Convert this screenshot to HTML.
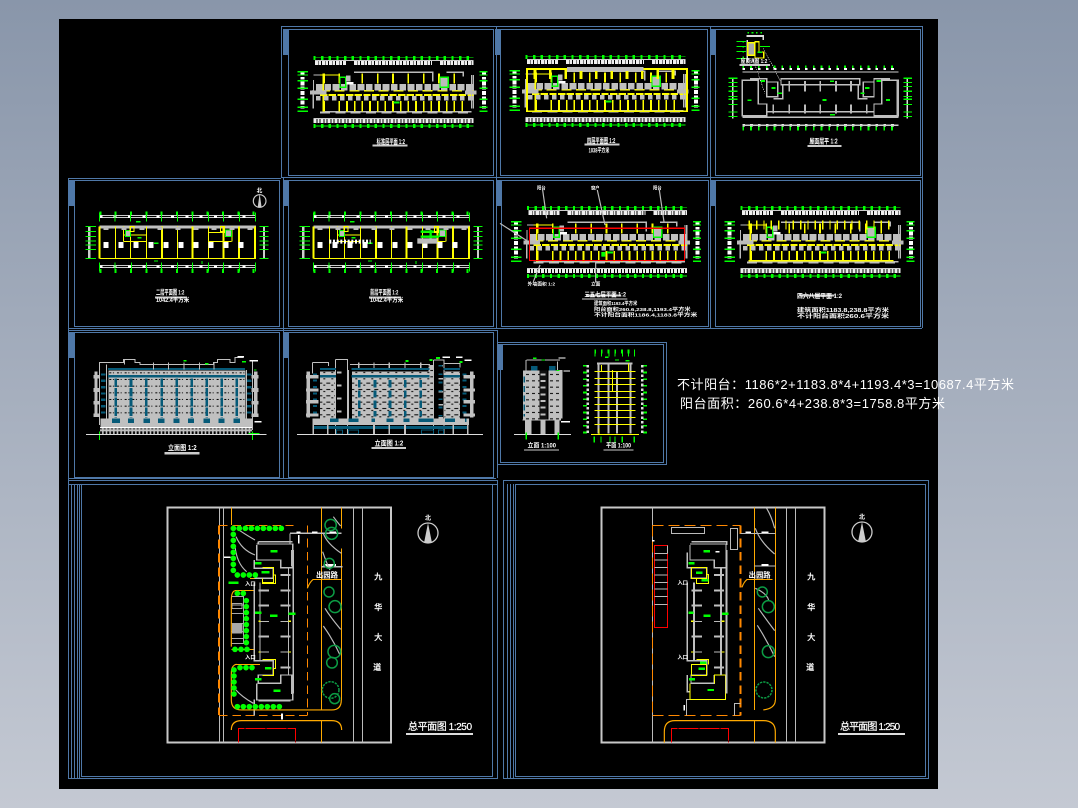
<!DOCTYPE html>
<html lang="zh"><head><meta charset="utf-8"><title>CAD</title>
<style>
html,body{margin:0;padding:0;width:1078px;height:808px;overflow:hidden;background:#a5aebd}
svg{position:absolute;left:0;top:0;display:block}
text{font-family:"Liberation Sans","WenQuanYi Zen Hei","Noto Sans CJK SC",sans-serif;fill:#fff}
</style></head><body>
<svg width="1078" height="808" viewBox="0 0 1078 808" xmlns="http://www.w3.org/2000/svg">
<defs>
<linearGradient id="bg" x1="0" y1="0" x2="0" y2="1"><stop offset="0" stop-color="#8996aa"/><stop offset="1" stop-color="#c4c9d3"/></linearGradient>
<pattern id="w1" patternUnits="userSpaceOnUse" width="23" height="20"><rect width="23" height="20" fill="#c0c0c0"/><rect x="3" y="7" width="6" height="3" fill="#000"/><rect x="14" y="7" width="3" height="3" fill="#000"/></pattern>
<pattern id="w2" patternUnits="userSpaceOnUse" width="24" height="19"><rect width="24" height="19" fill="#c0c0c0"/><rect x="1" y="6" width="12" height="3" fill="#000"/><rect x="16" y="12" width="6" height="3" fill="#000"/></pattern>
<pattern id="b1" patternUnits="userSpaceOnUse" width="11" height="20"><rect width="11" height="20" fill="#c0c0c0"/><rect x="2" y="4" width="6" height="14" fill="#000"/></pattern>
<pattern id="w3" patternUnits="userSpaceOnUse" width="18" height="19"><rect width="18" height="19" fill="#c0c0c0"/><rect x="3" y="7" width="9" height="3" fill="#000"/></pattern>

<g id="pa" fill="none" shape-rendering="crispEdges">
 <path d="M100 114H580M100 318H580" stroke="#0f0" stroke-width="13" stroke-dasharray="7 16"/>
 <path d="M100 112H580M100 318H580" stroke="#0f0" stroke-width="2"/>
 <path d="M105 128H198M222 128H456M480 128H580M100 302H580" stroke="#eee" stroke-width="15" stroke-dasharray="10 2 6 3"/>
 <path d="M105 122H580M100 296H580" stroke="#ccc" stroke-width="3"/>
 <path d="M68 155V275M612 155V275" stroke="#fff" stroke-width="12" stroke-dasharray="12 4 8 5"/>
 <path d="M52 155H84M52 165H84M52 182H84M52 205H84M52 238H84M52 262H84M52 274H84M598 155H622M598 165H622M598 182H622M598 205H622M598 238H622M598 262H622M598 274H622" stroke="#0f0" stroke-width="4"/>
 <path d="M100 210V265M130 275H575M580 165V265M100 165H130V185M222 157H458V185M500 157H550V170" stroke="#bbb" stroke-width="4"/>
 <path d="M120 165H180M130 160V275" stroke="#ff0" stroke-width="4"/>
 <path d="M120 225H580" stroke="#ff0" stroke-width="5" stroke-dasharray="22 4"/>
 <path d="M120 212H580" stroke="#ff0" stroke-width="5" stroke-dasharray="30 14"/>
 <path d="M108 202H580" stroke="#c0c0c0" stroke-width="20" stroke-dasharray="20 5"/>
 <path d="M108 235H580" stroke="#c0c0c0" stroke-width="14" stroke-dasharray="14 10"/>
 <path d="M132 161V190M178 161V190M247 161V190M293 161V190M339 161V190M385 161V190M431 161V190M477 161V190M523 161V190" stroke="#ff0" stroke-width="5"/>
 <path d="M132 243V275M178 243V275M201 243V275M224 243V275M247 243V275M270 243V275M293 243V275M316 243V275M339 243V275M362 243V275M385 243V275M408 243V275M431 243V275M454 243V275M477 243V275M500 243V275M523 243V275M547 243V275" stroke="#ff0" stroke-width="5"/>
 <path d="M120 277H580" stroke="#c0c0c0" stroke-width="6" stroke-dasharray="30 16"/>
 <path d="M100 180V265M575 165V265" stroke="#bbb" stroke-width="3"/>
 <rect x="180" y="172" width="17" height="30" stroke="#0f0" stroke-width="4"/><rect x="480" y="172" width="25" height="30" fill="#bbb" stroke="#0f0" stroke-width="4"/>
 <rect x="198" y="166" width="14" height="18" fill="#bbb"/><rect x="340" y="244" width="18" height="6" fill="#0f0"/>
 <path d="M90 217H140M555 217H590" stroke="#bbb" stroke-width="12"/>
 <path d="M200 186h20v8h-20z" fill="#fff"/>
 <path d="M278 376H382" stroke="#ccc" stroke-width="6"/>
</g>

<g id="pd" fill="none" shape-rendering="crispEdges">
 <path d="M118 115H588M118 288H588" stroke="#0f0" stroke-width="11" stroke-dasharray="6 40"/>
 <path d="M118 122H588M118 128H588M118 272H588M118 278H588" stroke="#ccc" stroke-width="3"/>
 <path d="M118 125H588M118 275H588" stroke="#fff" stroke-width="7" stroke-dasharray="9 34"/>
 <path d="M118 112V140M165 112V140M212 112V140M259 112V140M305 112V140M352 112V140M398 112V140M445 112V140M491 112V140M538 112V140M586 112V140" stroke="#0f0" stroke-width="3"/>
 <path d="M118 262V290M165 262V290M214 262V290M259 262V290M305 262V290M352 262V290M398 262V290M445 262V290M491 262V290M538 262V290M586 262V290" stroke="#0f0" stroke-width="3"/>
 <path d="M88 155V250M612 155V250" stroke="#ccc" stroke-width="7"/>
 <path d="M76 155H108M76 170H108M76 184H108M76 198H108M76 210H108M76 224H108M76 250H108M598 155H626M598 170H626M598 184H626M598 198H626M598 210H626M598 224H626M598 250H626" stroke="#0f0" stroke-width="3"/>
 <path d="M118 156H588" stroke="#c0c0c0" stroke-width="8"/>
 <path d="M118 251H588M212 155V250M120 155V250M166 155V250M259 155V250M352 155V250M445 155V250M516 155V200M190 155V200" stroke="#ff0" stroke-width="3"/>
 <path d="M119 155V250M306 155V250M398 155V250M491 155V250M537 155V250M585 155V250" stroke="#ff0" stroke-width="6"/>
 <path d="M190 200H260M445 200H515M190 180H260M445 172H515" stroke="#ff0" stroke-width="3"/>
 <rect x="197" y="167" width="15" height="17" fill="#bbb" stroke="#0f0" stroke-width="3"/><rect x="497" y="165" width="18" height="19" fill="#bbb" stroke="#0f0" stroke-width="3"/>
 <rect x="210" y="155" width="12" height="15" stroke="#ff0" stroke-width="3"/><rect x="482" y="155" width="12" height="15" stroke="#ff0" stroke-width="3"/>
 <path d="M130 210H570" stroke="#fff" stroke-width="17" stroke-dasharray="15 30"/>
 <path d="M130 160H580" stroke="#bbb" stroke-width="9" stroke-dasharray="16 38"/>
 <path d="M282 258H294M228 140H242M232 188H244M282 205H296M426 258V267" stroke="#0f0" stroke-width="4"/>
 <path d="M285 368H380" stroke="#ccc" stroke-width="6"/>
</g>
</defs>

<rect width="1078" height="808" fill="url(#bg)"/>
<rect x="59" y="19" width="879" height="770" fill="#000"/>

<!-- sheet frames -->
<g fill="none" stroke="#4f78a8" stroke-width="1" shape-rendering="crispEdges">
 <path d="M281 26.5H922.500V328M281.500 27V177M281 177.500H922"/>
 <rect x="288.500" y="29.500" width="205" height="146"/>
 <rect x="500.500" y="29.500" width="207" height="146"/>
 <rect x="715.500" y="29.500" width="205" height="146"/>
 <path d="M496.500 27V328M710.500 27V328"/>
 <path d="M68.500 178.500H281M68.500 178V778M68 328.500H922"/>
 <rect x="74.500" y="180.500" width="205" height="146"/>
 <rect x="288.500" y="180.500" width="205" height="146"/>
 <rect x="501.500" y="180.500" width="207" height="146"/>
 <rect x="715.500" y="180.500" width="205" height="146"/>
 <path d="M283.500 178V478M68 330.500H497.500V478M496 478.500H68"/>
 <rect x="74.500" y="332.500" width="205" height="145"/>
 <rect x="288.500" y="332.500" width="205" height="145"/>
 <rect x="497.500" y="342.500" width="169" height="122"/>
 <rect x="500.500" y="344.500" width="163" height="118"/>
 <path d="M68 480.500H497.500V778.500H68M68 484.500H497"/>
 <rect x="81.500" y="484.500" width="411" height="292"/>
 <rect x="503.500" y="480.500" width="425" height="298"/>
 <rect x="515.500" y="484.500" width="410" height="292"/>
 <path d="M71.500 484V778M74.500 484V778M77.500 484V778M79.500 484V778M507.500 484V778M510.500 484V778M513.500 484V778"/>
</g>
<g fill="#4f78a8" shape-rendering="crispEdges">
 <rect x="283" y="29" width="5" height="26"/><rect x="69" y="180" width="5" height="26"/><rect x="283" y="180" width="5" height="26"/><rect x="495" y="29" width="5" height="26"/><rect x="710" y="29" width="5" height="26"/><rect x="496" y="180" width="5" height="26"/><rect x="710" y="180" width="5" height="26"/><rect x="69" y="332" width="5" height="26"/><rect x="283" y="332" width="5" height="26"/><rect x="498" y="344" width="5" height="26"/>
</g>

<!-- plan A -->
<g transform="translate(280 20) scale(.3333)"><use href="#pa"/>
 <text x="290" y="372" font-size="21" font-weight="700" textLength="85" lengthAdjust="spacingAndGlyphs">标准层平面 1:2</text></g>
<!-- plan B -->
<g transform="translate(492 19) scale(.3333)"><use href="#pa"/>
 <path d="M105 150H585V277H105z" fill="none" stroke="#ff0" stroke-width="5" shape-rendering="crispEdges"/>
 <path d="M125 165H560" fill="none" stroke="#ff0" stroke-width="30" stroke-dasharray="8 38" shape-rendering="crispEdges"/>
 <path d="M225 150H455" stroke="#bbb" stroke-width="12" shape-rendering="crispEdges"/>
 <text x="285" y="372" font-size="21" font-weight="700" textLength="85" lengthAdjust="spacingAndGlyphs">四层平面图 1:2</text>
 <text x="290" y="400" font-size="18" font-weight="700" textLength="62" lengthAdjust="spacingAndGlyphs">1038平方米</text></g>
<!-- plan F -->
<g transform="translate(493.5 170) scale(.3333)"><use href="#pa"/></g>
<g transform="translate(490 175) scale(.3333)">
 <rect x="119" y="160" width="465" height="97" fill="none" stroke="#f00" stroke-width="3.5" shape-rendering="crispEdges"/>
 <path d="M158 45L170 130M322 45L345 150M508 45L522 140M30 145L115 200M150 270L130 320M317 260V322" fill="none" stroke="#bbb" stroke-width="3.5"/>
 <rect x="334" y="231" width="12" height="14" fill="#0f0"/>
 <text x="141" y="44" font-size="13" font-weight="700">阳台</text><text x="303" y="44" font-size="13" font-weight="700">窗户</text><text x="489" y="44" font-size="13" font-weight="700">阳台</text>
 <text x="113" y="332" font-size="14" font-weight="700" textLength="82" lengthAdjust="spacingAndGlyphs">外墙面积 1:2</text><text x="303" y="332" font-size="14" font-weight="700">立面</text>
 <text x="283" y="365" font-size="19" font-weight="700" textLength="125" lengthAdjust="spacingAndGlyphs">三五七层平面 1:2</text>
 <path d="M276 372H412" stroke="#ccc" stroke-width="3"/>
 <text x="312" y="390" font-size="15" font-weight="700" textLength="130" lengthAdjust="spacingAndGlyphs">建筑面积1193.4平方米</text>
 <text x="312" y="408" font-size="15" font-weight="700" textLength="290" lengthAdjust="spacingAndGlyphs">阳台面积260.6,238.8,1193.4平方米</text>
 <text x="312" y="424" font-size="15" font-weight="700" textLength="310" lengthAdjust="spacingAndGlyphs">不计阳台面积1186.4,1183.8平方米</text>
</g>
<!-- plan G -->
<g transform="translate(707 170) scale(.3333)"><use href="#pa"/>
 <path d="M125 165H560" fill="none" stroke="#ff0" stroke-width="26" stroke-dasharray="4 18" shape-rendering="crispEdges"/>
 <path d="M125 272H560" stroke="#ff0" stroke-width="4" shape-rendering="crispEdges"/>
</g>
<g font-weight="700"><text x="797" y="298" font-size="6.4" textLength="45" lengthAdjust="spacingAndGlyphs">四六八层平面 1:2</text><text x="797" y="312" textLength="92" font-size="5.5" lengthAdjust="spacingAndGlyphs">建筑面积1183.8,238.8平方米</text><text x="797" y="318" textLength="92" font-size="5.5" lengthAdjust="spacingAndGlyphs">不计阳台面积260.6平方米</text></g>

<!-- plan C -->
<g transform="translate(710 20) scale(.3333)" fill="none" shape-rendering="crispEdges">
 <path d="M97 143H565M97 326H565" stroke="#0f0" stroke-width="12" stroke-dasharray="5 18.5"/>
 <path d="M97 147H565M97 316H565" stroke="#fff" stroke-width="7" stroke-dasharray="8 15.5"/>
 <path d="M97 156H565M97 316H565" stroke="#ccc" stroke-width="4"/>
 <path d="M68 175V295M592 175V295" stroke="#ddd" stroke-width="5"/>
 <path d="M55 175H82M55 188H82M55 200H82M55 214H82M55 230H82M55 238H82M55 254H82M55 276H82M55 290H82M580 175H606M580 188H606M580 200H606M580 214H606M580 230H606M580 238H606M580 254H606M580 276H606M580 290H606" stroke="#0f0" stroke-width="3.5"/>
 <path d="M97 181H145V252H170V287H97ZM565 181H515V252H492V287H565ZM120 176H170V230H203V186H170M540 176H492V230H460V186H492M213 176H449V194H213ZM170 275H492M97 292H565M190 236H218V196M445 196V236H472" stroke="#c0c0c0" stroke-width="4"/>
 <path d="M563 181V287" stroke="#bbb" stroke-width="7"/>
 <path d="M190 253V280M238 253V280M285 253V280M331 253V280M378 253V280M423 253V280M470 253V280M238 183V215M285 183V215M331 183V215M378 183V215M423 183V215" stroke="#bbb" stroke-width="5"/>
 <path d="M112 241H125M152 183H165M184 204H197M203 220H216M338 240H350M360 184H372M360 284H375M452 220H464M465 204H478M500 183H513M528 240H540" stroke="#0f0" stroke-width="5"/>
 <!-- detail -->
 <path d="M112 38H160M97 65H110M97 80H110M97 95H110M97 112H110" stroke="#0f0" stroke-width="4" stroke-dasharray="5 8"/>
 <path d="M80 64H108M80 80H108M80 95H108M80 115H108M150 79H180" stroke="#0f0" stroke-width="3"/>
 <path d="M110 48H160V60M112 60V128" stroke="#ddd" stroke-width="5"/>
 <rect x="113" y="68" width="21" height="38" fill="#aaa" stroke="#ff0" stroke-width="4"/>
 <path d="M134 65H147V96H161V114H135V106" stroke="#ff0" stroke-width="4"/>
 <path d="M142 97H156" stroke="#0f0" stroke-width="5"/>
 <path d="M160 85L215 190M130 120L165 220" stroke="#ccc" stroke-width="2" stroke-dasharray="4 3"/>
 <path d="M88 135H180" stroke="#ccc" stroke-width="5"/>
 <text x="92" y="129" font-size="17" font-weight="700" fill="#fff" stroke="none" textLength="80" lengthAdjust="spacingAndGlyphs">屋顶详图 1:2</text>
 <path d="M292 378H395" stroke="#ccc" stroke-width="5"/>
 <text x="298" y="371" font-size="21" font-weight="700" fill="#fff" stroke="none" textLength="85" lengthAdjust="spacingAndGlyphs">屋面层平 1:2</text>
</g>

<!-- plan D -->
<g transform="translate(60 175) scale(.3333)"><use href="#pd"/>
 <text x="288" y="358" font-size="20" font-weight="700" textLength="85" lengthAdjust="spacingAndGlyphs">二层平面图 1:2</text>
 <text x="288" y="381" font-size="18" font-weight="700" textLength="100" lengthAdjust="spacingAndGlyphs">1042.4平方米</text>
 <text x="590" y="52" font-size="17" font-weight="700">北</text>
 <circle cx="599" cy="78" r="19" fill="none" stroke="#ccc" stroke-width="3.5"/>
 <path d="M599 55L593 98H605Z" fill="#ccc"/>
</g>
<!-- plan E -->
<g transform="translate(274 175) scale(.3333)"><use href="#pd"/>
 <path d="M440 170H480M440 185H495M470 165V200" stroke="#0f0" stroke-width="7" fill="none"/>
 <rect x="430" y="190" width="60" height="16" fill="#bbb"/>
 <path d="M166 200H290" stroke="#fff" stroke-width="12" stroke-dasharray="6 5" fill="none"/>
 <text x="288" y="358" font-size="20" font-weight="700" textLength="85" lengthAdjust="spacingAndGlyphs">首层平面图 1:2</text>
 <text x="288" y="381" font-size="18" font-weight="700" textLength="100" lengthAdjust="spacingAndGlyphs">1042.4平方米</text>
</g>

<!-- elevations -->
<g transform="translate(70 330) scale(.3333)" fill="none" shape-rendering="crispEdges">
 <rect x="115" y="122" width="412" height="145" fill="url(#w1)"/>
 <rect x="92" y="265" width="455" height="30" fill="#c0c0c0"/>
 <rect x="90" y="296" width="456" height="17" fill="url(#b1)"/>
 <path d="M90 292H546" stroke="#fff" stroke-width="3"/>
 <path d="M114 117H525" stroke="#065a78" stroke-width="7"/>
 <path d="M114 139H525" stroke="#065a78" stroke-width="8"/>
 <path d="M137 145V262M183 145V262M229 145V262M275 145V262M320 145V262M365 145V262M410 145V262M455 145V262M500 145V262" stroke="#065a78" stroke-width="8" stroke-dasharray="26 3"/>
 <path d="M126 272H150M174 272H192M220 272H240M264 272H284M310 272H328M354 272H372M400 272H420M446 272H464M490 272H510" stroke="#065a78" stroke-width="14"/>
 <path d="M100 130V260M538 130V260" stroke="#065a78" stroke-width="14" stroke-dasharray="7 12"/>
 <path d="M88 285V97H160V88H195V97H210V103H430V97H442V88H480V97H495V82H520M110 103V265M530 120V265M548 95V300M163 90V103M250 97V118M296 97V118M342 97V118M388 97V118M432 97V118" stroke="#c0c0c0" stroke-width="3"/>
 <path d="M78 125V260M557 125V260" stroke="#c0c0c0" stroke-width="10"/>
 <path d="M70 140H90M70 180H90M70 218H90M70 256H90M545 140H566M545 180H566M545 218H566M545 256H566" stroke="#c0c0c0" stroke-width="11"/>
 <path d="M340 92H350M405 101H415M516 95H528M552 120H560" stroke="#0f0" stroke-width="4"/>
 <path d="M88 305V330M548 305V330M535 310H568" stroke="#0f0" stroke-width="3"/>
 <path d="M48 313H590" stroke="#ddd" stroke-width="3"/>
 <path d="M538 92H564M553 275H575M503 80H522" stroke="#fff" stroke-width="4"/>
 <path d="M284 370H388" stroke="#ccc" stroke-width="8"/>
 <text x="294" y="360" font-size="21" font-weight="700" fill="#fff" stroke="none" textLength="86" lengthAdjust="spacingAndGlyphs">立面图 1:2</text>
 <!-- elevation I -->
 <rect x="750" y="125" width="45" height="140" fill="url(#w2)"/>
 <rect x="846" y="125" width="245" height="140" fill="url(#w2)"/>
 <rect x="1120" y="125" width="50" height="140" fill="url(#w2)"/>
 <path d="M832 120V265M835 120V265" stroke="#c0c0c0" stroke-width="4"/>
 <rect x="1076" y="105" width="15" height="160" fill="url(#w2)"/>
 <rect x="800" y="100" width="32" height="195" fill="#000"/>
 <rect x="1092" y="100" width="28" height="195" fill="#000"/>
 <path d="M808 125V285M1112 105V285" stroke="#c0c0c0" stroke-width="14" stroke-dasharray="5 34"/>
 <path d="M1112 105V285" stroke="#065a78" stroke-width="12" stroke-dasharray="5 20"/>
 <path d="M796 88H833V312M796 88V312M1090 90H1122V312M1090 90V312" stroke="#c0c0c0" stroke-width="3"/>
 <path d="M727 97H775V108M840 103H1080M1123 100H1170V112M727 97V130" stroke="#c0c0c0" stroke-width="3"/>
 <path d="M866 97V118M912 97V118M958 97V118M1005 97V118M1052 97V118" stroke="#c0c0c0" stroke-width="4"/>
 <path d="M750 117H798M845 117H1078M1120 117H1170" stroke="#065a78" stroke-width="7"/>
 <path d="M750 139H798M845 139H1078M1120 139H1170" stroke="#065a78" stroke-width="7"/>
 <path d="M868 150V260M915 150V260M960 150V260M1006 150V260M1052 150V260" stroke="#065a78" stroke-width="8" stroke-dasharray="22 9"/>
 <rect x="727" y="265" width="470" height="20" fill="#c0c0c0"/>
 <path d="M727 292H1192" stroke="#065a78" stroke-width="9"/>
 <path d="M780 271H805M835 271H865M905 271H915M950 271H970M1000 271H1018M1045 271H1090M1125 271H1155M1185 271H1190" stroke="#065a78" stroke-width="11"/>
 <path d="M800 300H818V312H800ZM835 300H865V312H835ZM1055 300H1090V312H1055ZM1105 300H1120V312H1105Z" stroke="#065a78" stroke-width="3"/>
 <path d="M730 285V312M773 285V312M912 285V312M958 285V312M1005 285V312M1150 285V312M1193 285V312" stroke="#c0c0c0" stroke-width="5"/>
 <path d="M735 130V260M1183 130V260" stroke="#065a78" stroke-width="12" stroke-dasharray="6 13"/>
 <path d="M715 125V262M1205 125V262" stroke="#c0c0c0" stroke-width="10"/>
 <path d="M708 140H745M708 180H745M708 215H745M708 255H745M1180 140H1215M1180 180H1215M1180 215H1215M1180 255H1215" stroke="#c0c0c0" stroke-width="10"/>
 <path d="M1006 93H1016M1098 84H1110M1078 90H1088M1168 96H1178" stroke="#0f0" stroke-width="5"/>
 <path d="M1118 82H1140M1158 82H1178M1184 91H1205" stroke="#fff" stroke-width="5"/>
 <path d="M681 313H1239" stroke="#ddd" stroke-width="3"/>
 <path d="M904 354H1008" stroke="#ccc" stroke-width="5"/>
 <text x="914" y="346" font-size="21" font-weight="700" fill="#fff" stroke="none" textLength="86" lengthAdjust="spacingAndGlyphs">立面图 1:2</text>
</g>
<g transform="translate(495 340) scale(.3333)" fill="none" shape-rendering="crispEdges">
 <rect x="84" y="92" width="50" height="148" fill="url(#w3)"/>
 <rect x="160" y="92" width="38" height="148" fill="url(#w3)"/>
 <rect x="134" y="92" width="22" height="148" fill="#111"/>
 <path d="M144 100V240" stroke="#c0c0c0" stroke-width="14" stroke-dasharray="6 14"/>
 <path d="M82 240H198M93 60V92M188 65V92M95 60H195" stroke="#c0c0c0" stroke-width="3"/>
 <rect x="90" y="240" width="20" height="42" fill="#c0c0c0"/><rect x="137" y="240" width="14" height="42" fill="#c0c0c0"/><rect x="178" y="240" width="16" height="42" fill="#c0c0c0"/>
 <rect x="108" y="78" width="20" height="14" fill="#065a78"/><rect x="162" y="78" width="20" height="14" fill="#065a78"/>
 <path d="M88 110V230" stroke="#065a78" stroke-width="4" stroke-dasharray="18 10"/>
 <path d="M198 90V235" stroke="#c0c0c0" stroke-width="9"/>
 <path d="M57 283H228" stroke="#ddd" stroke-width="3"/>
 <path d="M94 278V298M190 278V298M114 55H124M140 60H150M184 92H194" stroke="#0f0" stroke-width="3.5"/>
 <path d="M190 54H212M205 93H225M198 245H225" stroke="#fff" stroke-width="4"/>
 <path d="M87 330H192" stroke="#ccc" stroke-width="4"/>
 <text x="98" y="322" font-size="18" font-weight="700" fill="#fff" stroke="none" textLength="85" lengthAdjust="spacingAndGlyphs">立面 1:100</text>
 <!-- section plan -->
 <path d="M298 35H420M270 75V285M450 75V285" stroke="#0f0" stroke-width="12" stroke-dasharray="5 15"/>
 <path d="M300 28V50M320 28V50M342 28V50M360 28V50M382 28V50M400 28V50M418 28V50" stroke="#0f0" stroke-width="3"/>
 <path d="M278 75V280M442 75V280" stroke="#ddd" stroke-width="7" stroke-dasharray="8 6"/>
 <path d="M310 70V280M340 70V280M366 95V280M407 70V280M306 70H412" stroke="#c0c0c0" stroke-width="6"/>
 <path d="M298 95H422M298 115H422M298 133H422M298 155H422M298 173H422M298 193H422M298 212H422M298 232H422M298 253H422" stroke="#ff0" stroke-width="3"/>
 <path d="M320 75V95M400 70V95M312 265V285M352 90V155" stroke="#ff0" stroke-width="3"/>
 <path d="M288 284H432" stroke="#ff0" stroke-width="3"/>
 <path d="M298 290V308M318 290V308M345 290V308M360 290V308M382 290V308M418 290V308M330 52H340M360 60H372M392 62H404" stroke="#0f0" stroke-width="4"/>
 <path d="M325 330H415" stroke="#ccc" stroke-width="4"/>
 <text x="333" y="322" font-size="18" font-weight="700" fill="#fff" stroke="none" textLength="75" lengthAdjust="spacingAndGlyphs">平面 1:100</text>
</g>

<!-- dimension text -->
<text x="677" y="389" font-size="13" textLength="337" lengthAdjust="spacing">不计阳台：1186*2+1183.8*4+1193.4*3=10687.4平方米</text>
<text x="680" y="408" font-size="13" textLength="265" lengthAdjust="spacing">阳台面积：260.6*4+238.8*3=1758.8平方米</text>

<!-- site plan 1 -->
<g transform="translate(160 500) scale(.3333)" fill="none">
 <g shape-rendering="crispEdges">
 <rect x="23" y="23" width="670" height="705" stroke="#c8c8c8" stroke-width="6"/>
 <path d="M178 23V728M190 23V728M580 23V728M607 23V728" stroke="#bbb" stroke-width="3"/>
 <path d="M214 23V75M484 23V630M544 23V85M544 145V600M484 662V728" stroke="#fa0" stroke-width="3"/>
 <path d="M177 76V645" stroke="#f80" stroke-width="6" stroke-dasharray="28 14"/>
 <path d="M177 76H400M442 76V645M177 646H442" stroke="#f80" stroke-width="3" stroke-dasharray="26 14"/>
 <path d="M235 728V686H406V728" stroke="#f00" stroke-width="3" stroke-dasharray="60 3"/>
 <path d="M225 272H285M214 448H285M225 493H300M270 236H300" stroke="#fa0" stroke-width="3"/>
 <path d="M290 135V180H362V203H398V132H290M295 125H398M295 125V132M283 180V205H340V235H283M283 248V482H340V525H295V550H362V525H398V600H290V550M283 598V646M295 603H392M400 150V580M390 100V130M390 100H544M484 200H548" stroke="#c0c0c0" stroke-width="4"/>
 <path d="M397 150V200M397 525V582" stroke="#bbb" stroke-width="8"/>
 <path d="M295 272H327M295 317H327M295 410H327M362 225H392M362 272H392M362 317H392M362 410H392M362 503H392" stroke="#c0c0c0" stroke-width="6"/>
 <path d="M300 364H327M362 364H392M300 456H327M362 456H392" stroke="#bbb" stroke-width="3"/>
 <path d="M385 203V525M300 248V480" stroke="#bbb" stroke-width="3"/>
 <path d="M308 202H340V248H308M340 225H346V250H308V236M308 478H346V505H340V527H308" stroke="#ff0" stroke-width="3"/>
 <path d="M295 364h6M295 456h6M385 364h8M385 456h8" stroke="#ff0" stroke-width="4"/>
 <path d="M214 290H250V430H214M214 315H250M214 340H250M214 370H250M214 395H250M214 415H250" stroke="#aaa" stroke-width="3"/>
 <rect x="216" y="310" width="30" height="16" stroke="#aaa" stroke-width="3"/><rect x="216" y="372" width="32" height="28" fill="#aaa"/>
 <path d="M332 154H352M305 217H328M285 190H304M330 347H352M285 338H304M385 341H407M205 248H236M315 505H335M285 538H304M340 572H362" stroke="#0f0" stroke-width="7"/>
 <path d="M192 172H212M456 97H472M508 97H528M416 105V130M490 195H528M366 640V658M410 97H422" stroke="#fff" stroke-width="5"/>
 <path d="M458 238H544" stroke="#fa0" stroke-width="3"/>
 </g>
 <path d="M544 600Q544 630 515 630H245Q214 630 214 600V520Q214 495 230 493M214 440V300Q214 275 225 272M442 265Q450 245 460 238M214 690Q214 662 245 662H515Q545 662 545 690" stroke="#fa0" stroke-width="3.5"/>
 <path d="M228 110Q245 150 285 165M225 138Q230 190 260 215M230 85Q250 100 285 120M520 50Q535 70 542 78M490 100Q500 130 544 160M488 155Q500 190 510 210M495 325Q510 350 542 388M490 378Q520 420 540 465M228 570Q245 590 280 610" stroke="#bbb" stroke-width="3.5"/>
 <g stroke="#0f0" stroke-width="17" stroke-linecap="round" stroke-dasharray="0 18">
 <path d="M220 85H365M220 85V215M232 225H292M232 280H268M259 302V430M225 448H265M240 503H290M222 510V600M232 620H360"/>
 </g>
 <g stroke="#0c9c44" stroke-width="4.500">
 <circle cx="512" cy="75" r="17"/><circle cx="515" cy="100" r="18"/><circle cx="508" cy="190" r="15"/><circle cx="507" cy="276" r="15"/><circle cx="525" cy="320" r="18"/><circle cx="523" cy="455" r="19"/><circle cx="516" cy="488" r="16"/><circle cx="512" cy="570" r="25" stroke-dasharray="7 3"/><circle cx="524" cy="596" r="15"/>
 </g>
 <g font-weight="700"><text x="255" y="256" font-size="16">入口</text><text x="255" y="477" font-size="16">入口</text></g>
 <text x="468" y="233" font-size="23" font-weight="700" textLength="66" lengthAdjust="spacingAndGlyphs">出园路</text>
 <g font-size="24" stroke="#fff" stroke-width="1"><text x="643" y="238">九</text><text x="643" y="330">华</text><text x="643" y="420">大</text><text x="640" y="510">道</text></g>
</g>

<!-- site plan 2 -->
<g transform="translate(590 500) scale(.3333)" fill="none">
 <g shape-rendering="crispEdges">
 <rect x="35" y="23" width="668" height="705" stroke="#c8c8c8" stroke-width="6"/>
 <path d="M187 23V728M589 23V728M616 23V728" stroke="#bbb" stroke-width="3"/>
 <path d="M493 23V630M556 23V600M493 662V728M470 238H548" stroke="#fa0" stroke-width="3"/>
 <path d="M187 76H452M187 646H452M187 76V646" stroke="#f80" stroke-width="3" stroke-dasharray="34 14"/>
 <path d="M452 76V646" stroke="#f80" stroke-width="6" stroke-dasharray="26 14"/>
 <path d="M193 136H232V382H193Z" stroke="#f00" stroke-width="3"/>
 <path d="M193 160H232M193 180H232M193 202H232M193 225H232M193 247H232M193 267H232M193 289H232M193 313H232M232 136V160" stroke="#bbb" stroke-width="3"/>
 <path d="M244 728V686H415V728" stroke="#f00" stroke-width="3" stroke-dasharray="60 3"/>
 <rect x="244" y="83" width="100" height="18" stroke="#bbb" stroke-width="3"/>
 <rect x="421" y="85" width="22" height="64" stroke="#bbb" stroke-width="3"/>
 <path d="M433 646V610H452M452 100H556M493 198H556M290 646V598H400" stroke="#bbb" stroke-width="3"/>
 <path d="M300 135V180H373V203H408V132H300M304 125H410V135M292 158V203H350V235H304V202M292 248V482H350V525H303V550H373V525M292 525V575H300M408 150V580" stroke="#c0c0c0" stroke-width="4"/>
 <path d="M300 550V598H407V525H373V550" stroke="#ff0" stroke-width="3"/>
 <path d="M410 150V580M312 248V480" stroke="#c0c0c0" stroke-width="6"/>
 <path d="M393 203V525" stroke="#c0c0c0" stroke-width="6"/>
 <path d="M304 272H336M304 317H336M304 410H336M372 225H402M372 272H402M372 317H402M372 410H402M372 503H402" stroke="#c0c0c0" stroke-width="6"/>
 <path d="M310 364H336M372 364H402M310 456H336M372 456H402" stroke="#bbb" stroke-width="3"/>
 <path d="M304 202H350V236H304ZM350 223H356V250H320V236M320 478H356V493M304 493H350V527H304Z" stroke="#ff0" stroke-width="3"/>
 <path d="M303 364h8M303 456h8M395 364h8M395 456h8" stroke="#ff0" stroke-width="4"/>
 <path d="M340 154H360M295 190H314M318 218H338M335 241H355M295 338H310M340 347H362M396 341H415M330 488H350M325 506H345M297 538H315M352 570H372" stroke="#0f0" stroke-width="7"/>
 <path d="M466 97H483M515 97H536M515 195H536M283 615V632M186 122H194M376 155H388" stroke="#fff" stroke-width="5"/>
 </g>
 <path d="M556 600Q556 625 520 630M456 262Q462 245 472 238M223 728V695Q223 662 255 662H520Q556 662 556 695V728" stroke="#fa0" stroke-width="3.5"/>
 <path d="M530 25Q545 50 554 85M496 85Q510 125 554 162M496 265Q530 280 536 300M505 325Q530 360 554 392M502 376Q530 420 554 470" stroke="#bbb" stroke-width="3.5"/>
 <g stroke="#0c9c44" stroke-width="4.500">
 <circle cx="517" cy="276" r="15"/><circle cx="535" cy="320" r="18"/><circle cx="535" cy="455" r="18"/><circle cx="522" cy="570" r="24" stroke-dasharray="7 3"/>
 </g>
 <g font-size="16" font-weight="700"><text x="262" y="254">入口</text><text x="262" y="477">入口</text></g>
 <text x="476" y="233" font-size="23" font-weight="700" textLength="66" lengthAdjust="spacingAndGlyphs">出园路</text>
 <g font-size="24" stroke="#fff" stroke-width="1"><text x="652" y="238">九</text><text x="652" y="330">华</text><text x="652" y="420">大</text><text x="649" y="510">道</text></g>
</g>

<!-- titles + north -->
<g font-size="10" font-weight="400" stroke="#fff" stroke-width=".2"><text x="408" y="730" textLength="64">总平面图 1:250</text><text x="840" y="730" textLength="60">总平面图 1:250</text></g>
<path d="M406 734H473M838 734H905" stroke="#ddd" stroke-width="2" shape-rendering="crispEdges"/>
<g fill="none" stroke="#ccc" stroke-width="1.3"><circle cx="428" cy="533" r="10"/><circle cx="862" cy="532" r="10"/></g>
<path d="M428 523L424 543H432ZM862 522L858 542H866Z" fill="#ccc"/>
<g font-size="6" font-weight="700"><text x="425" y="520">北</text><text x="859" y="519">北</text></g>
</svg>
</body></html>
